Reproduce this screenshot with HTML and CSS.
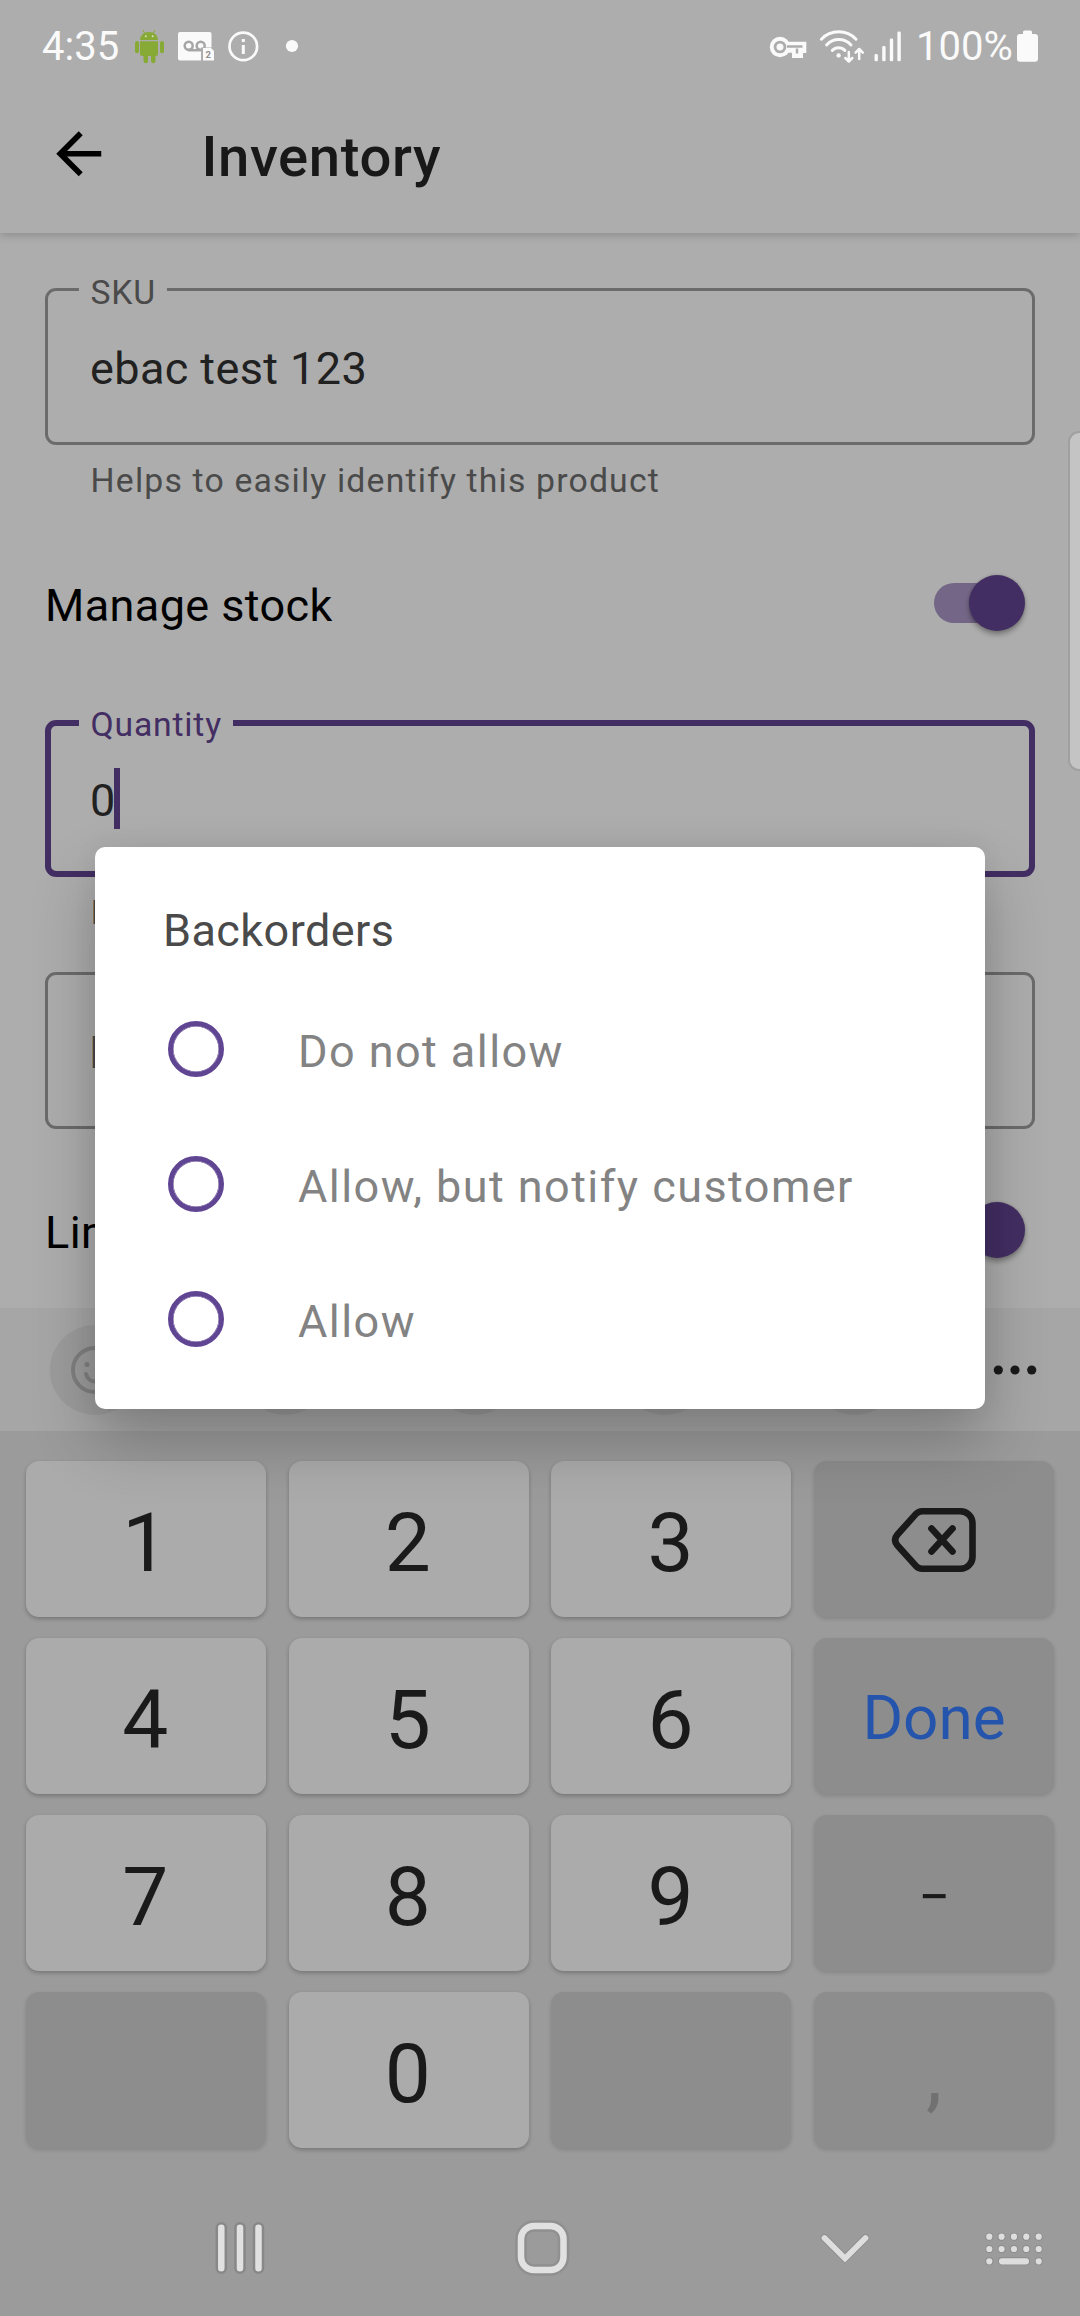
FILE: index.html
```html
<!DOCTYPE html>
<html lang="en">
<head>
<meta charset="utf-8">
<title>Inventory</title>
<link rel="stylesheet" href="styles.css">
</head>
<body>
<div class="screen">
  <header class="status">
    <span class="clock">4:35</span>
    <svg class="status-left" width="170" height="40" viewBox="134 26 170 40">
      <g fill="#87aa36">
        <path d="M140 40a9 8 0 0 1 18 0z"/>
        <path d="M145 34l-2-4M153 34l2-4" stroke="#87aa36" stroke-width="1"/>
        <path d="M140 41.3h18V54a2 2 0 0 1-2 2h-.5v5a2 2 0 0 1-4.5 0v-5h-3v5a2 2 0 0 1-4.5 0v-5H142a2 2 0 0 1-2-2z"/>
        <rect x="135" y="41" width="4" height="12.3" rx="2"/>
        <rect x="160" y="41" width="4" height="12.3" rx="2"/>
      </g>
      <circle cx="145.8" cy="36.3" r="1" fill="#d5dfbf"/><circle cx="152.7" cy="36.3" r="1" fill="#d5dfbf"/>
      <rect x="178" y="32" width="33.5" height="28.5" rx="2" fill="#fafafa"/>
      <g fill="none" stroke="#a6a6a6" stroke-width="2.5">
        <circle cx="188.7" cy="45.8" r="4"/><circle cx="200.7" cy="45.8" r="4"/><path d="M188 50.2h14"/>
      </g>
      <path d="M201 62V47.5h12V44h3v18z" fill="#adadad"/>
      <path d="M203 48h8l3 3v9.5h-11z" fill="#fafafa"/>
      <text x="205.4" y="58" class="badge">2</text>
      <circle cx="243.3" cy="46.4" r="13.8" fill="none" stroke="#fafafa" stroke-width="2.7"/>
      <path d="M243.3 39v3M243.3 45v9" stroke="#fafafa" stroke-width="3"/>
      <circle cx="292" cy="46" r="6.1" fill="#fafafa"/>
    </svg>
    <svg class="status-right" width="134" height="40" viewBox="769 26 134 40">
      <g fill="#fafafa">
        <circle cx="780" cy="47" r="10.2"/>
        <path d="M785 41.8h21.3V53h-3.3v5h-11v-5.3h-7z"/>
        <rect x="874.5" y="54" width="3.4" height="7.3" rx="1.4"/>
        <rect x="882.2" y="46" width="3.4" height="15.3" rx="1.4"/>
        <rect x="889.8" y="38.6" width="3.4" height="22.7" rx="1.4"/>
        <rect x="897.4" y="31.6" width="3.4" height="29.7" rx="1.4"/>
        <circle cx="838.6" cy="55.4" r="2.2"/>
      </g>
      <circle cx="780" cy="47" r="4.9" fill="none" stroke="#adadad" stroke-width="2.8"/>
      <path d="M787 46.5h15.5M797 48.5v5" fill="none" stroke="#adadad" stroke-width="2.4"/>
      <g fill="none" stroke="#fafafa" stroke-width="3" stroke-linecap="round" stroke-linejoin="round">
        <path d="M821.4 39.2a24 24 0 0 1 34.6 0M826.6 44.9a16.6 16.6 0 0 1 24.4 0M832.3 50.4a8.8 8.8 0 0 1 12.6 0"/>
        <path d="M848.8 52v9M845.3 58l3.5 3.5 3.5-3.5M859.2 59v-9M855.6 52.6l3.6-3.6 3.6 3.6" stroke-width="2.5"/>
      </g>
    </svg>
    <span class="percent">100%</span>
    <svg width="22" height="32" viewBox="1017 30 22 32"><path d="M1023 34v-2a1.5 1.5 0 0 1 1.5-1.5h6A1.5 1.5 0 0 1 1032 32v2h3a3 3 0 0 1 3 3v21.7a3 3 0 0 1-3 3h-15a3 3 0 0 1-3-3V37a3 3 0 0 1 3-3z" fill="#fafafa"/></svg>
  </header>

  <div class="toolbar">
    <svg class="back" viewBox="0 0 24 24"><path d="M20 11H7.83l5.59-5.59L12 4l-8 8 8 8 1.41-1.41L7.83 13H20z"/></svg>
    <h1 class="title">Inventory</h1>
  </div>

  <main class="form">
    <div class="field"><label class="label">SKU</label><span>ebac test 123</span></div>
    <p class="helper">Helps to easily identify this product</p>
    <div class="row"><span class="row-text">Manage stock</span><span class="switch"><span class="thumb"></span></span></div>
    <div class="field active"><label class="label">Quantity</label><span>0</span><span class="caret"></span></div>
    <p class="helper">I</p>
    <div class="field empty"><span>B</span></div>
    <div class="row last"><span class="row-text">Limit one per order</span><span class="switch"><span class="thumb"></span></span></div>
  </main>

  <div class="tools">
    <span class="tool"><svg width="50" height="50" viewBox="0 0 50 50" fill="none" stroke="#808080" stroke-width="4" stroke-linecap="round"><circle cx="25" cy="25" r="22"/><path d="M16 29c3 10 15 10 18 0"/><circle cx="17" cy="19.5" r="2.5" fill="#808080" stroke="none"/><circle cx="33" cy="19.5" r="2.5" fill="#808080" stroke="none"/></svg></span>
    <span class="tool"></span><span class="tool"></span><span class="tool"></span><span class="tool"></span>
    <svg class="more" width="44" height="12" viewBox="0 0 44 12" fill="#1a1a1a"><circle cx="5.3" cy="6" r="4.6"/><circle cx="22" cy="6" r="4.6"/><circle cx="38.7" cy="6" r="4.6"/></svg>
  </div>

  <div class="keys">
    <span class="key">1</span><span class="key">2</span><span class="key">3</span>
    <span class="key dark"><svg class="erase" width="86" height="66" viewBox="0 0 86 66" fill="none" stroke="#1a1a1a" stroke-width="6.6" stroke-linecap="round" stroke-linejoin="round"><path d="M31 4.2h38.500a12 12 0 0 1 12 12v33.600a12 12 0 0 1-12 12H31q-3.500 0-6-2.700L6.500 38.500q-4.800-5.500 0-11L25 6.900q2.500-2.700 6-2.700z"/><path d="M40.500 21.500l21 23M61.500 21.500l-21 23"/></svg></span>
    <span class="key">4</span><span class="key">5</span><span class="key">6</span><span class="key dark done">Done</span>
    <span class="key">7</span><span class="key">8</span><span class="key">9</span><span class="key dark minus">−</span>
    <span class="key dark"></span><span class="key">0</span><span class="key dark"></span><span class="key dark comma">,</span>
  </div>

  <nav class="nav">
    <svg width="1080" height="70" viewBox="0 2213 1080 70" fill="none" stroke-linecap="round">
      <g stroke="#888" stroke-width="11.500"><path d="M221.300 2227.700v40.500M240 2227.700v40.500M258.500 2227.700v40.500"/></g>
      <g stroke="#e1e1e1" stroke-width="6.500"><path d="M221.300 2227.700v40.500M240 2227.700v40.500M258.500 2227.700v40.500"/></g>
      <rect x="521" y="2226" width="42.500" height="44" rx="13" stroke="#909090" stroke-width="11.500"/>
      <rect x="521" y="2226" width="42.500" height="44" rx="13" stroke="#e1e1e1" stroke-width="6.500"/>
      <path d="M824.500 2238l20.500 20.500 20.500-20.500" stroke="#8e8e8e" stroke-width="7.500"/>
      <path d="M824.500 2238l20.500 20.500 20.500-20.500" stroke="#dedede" stroke-width="5.800"/>
      <g stroke="#8c8c8c" stroke-width="8"><path d="M989.300 2236.700h0M1001.600 2236.700h0M1014 2236.700h0M1026.300 2236.700h0M1038.700 2236.700h0M989.300 2249h0M1001.600 2249h0M1014 2249h0M1026.300 2249h0M1038.700 2249h0M989.300 2261.300h0M1002 2261.300h24M1038.700 2261.300h0"/></g>
      <g stroke="#dedede" stroke-width="6.200"><path d="M989.300 2236.700h0M1001.600 2236.700h0M1014 2236.700h0M1026.300 2236.700h0M1038.700 2236.700h0M989.300 2249h0M1001.600 2249h0M1014 2249h0M1026.300 2249h0M1038.700 2249h0M989.300 2261.300h0M1002 2261.300h24M1038.700 2261.300h0"/></g>
    </svg>
  </nav>

  <div class="edge-handle"></div>

  <section class="dialog">
    <h2 class="dialog-title">Backorders</h2>
    <div class="option"><span class="radio"></span>Do not allow</div>
    <div class="option"><span class="radio"></span>Allow, but notify customer</div>
    <div class="option"><span class="radio"></span>Allow</div>
  </section>
</div>
</body>
</html>
```
FILE: styles.css
```css
* { box-sizing: border-box; margin: 0; padding: 0; }
body { font-family: Roboto, sans-serif; }
svg { display: block; flex: none; }

.screen {
  position: relative;
  width: 1080px;
  height: 2316px;
  overflow: hidden;
  display: flex;
  flex-direction: column;
  background: #adadad;
}

/* status bar */
.status {
  height: 92px;
  flex: none;
  display: flex;
  align-items: center;
  padding: 0 41px 0 42px;
  font-size: 40px;
  color: #fafafa;
}
.clock { width: 92px; }
.status-right { margin-left: auto; margin-right: 13px; }
.percent { width: 101px; }
.badge { font: bold 9.5px Roboto, sans-serif; fill: #909090; }

/* app bar */
.toolbar {
  height: 141px;
  flex: none;
  display: flex;
  padding: 28px 45px;
  box-shadow: 0 2px 9px rgba(0, 0, 0, .2);
  clip-path: inset(0 0 -16px 0);
}
.back { width: 67.5px; height: 67.5px; }
.title {
  margin: 4px 0 0 89px;
  font-size: 56.25px;
  line-height: 66px;
  font-weight: 500;
  letter-spacing: .6px;
  color: #181818;
}

/* form */
.form {
  height: 1075px;
  flex: none;
  overflow: hidden;
  padding: 55px 45px 0;
  letter-spacing: .4px;
  font-size: 45px;
  line-height: 53px;
}
.field {
  position: relative;
  display: flex;
  height: 157px;
  padding: 51px 42px 0;
  border: 3px solid #6b6b6b;
  border-radius: 11px;
  color: #212121;
}
.label {
  position: absolute;
  left: 31px;
  top: -18px;
  padding: 0 10.5px 0 11.5px;
  background: #adadad;
  font-size: 33.75px;
  line-height: 40px;
  letter-spacing: .8px;
  color: #4a4a4a;
}
.field.active {
  border: 6px solid #432e63;
  padding: 48px 39px 0;
}
.active .label { left: 28px; top: -21px; color: #432e63; padding-right: 11.5px; }
.caret { width: 6px; height: 61px; margin: -6px 0 0 -2px; background: #432e63; }
.field.empty { margin-top: 39px; padding-left: 41px; color: #4a4a4a; }
.helper {
  margin: 16px 0 0 45.6px;
  height: 40px;
  font-size: 33.75px;
  line-height: 40px;
  letter-spacing: 1.17px;
  color: #4a4a4a;
}
.row {
  height: 56px;
  margin: 74px 10px 89px 0;
  display: flex;
  justify-content: space-between;
  align-items: center;
  color: #000;
}
.row.last { margin-top: 73px; }
.row-text { padding-top: 5px; }
.last .row-text { padding-top: 4px; }
.switch {
  width: 91px;
  height: 40px;
  display: flex;
  align-items: center;
  justify-content: flex-end;
  border-radius: 20px;
  background: linear-gradient(90deg, #736686 60px, transparent 60px);
}
.thumb {
  width: 56px;
  height: 56px;
  flex: none;
  border-radius: 50%;
  background: #432e63;
  box-shadow: 0 4px 5px rgba(0, 0, 0, .28), 0 0 3px rgba(0, 0, 0, .2);
}

/* keyboard */
.tools {
  height: 123px;
  flex: none;
  display: flex;
  align-items: center;
  gap: 100px;
  padding: 0 42px 0 50px;
  background: #a6a6a6;
}
.tool {
  width: 90px;
  height: 90px;
  display: grid;
  place-items: center;
  border-radius: 50%;
  background: #9c9c9c;
}
.more { margin-left: -7px; }
.keys {
  height: 749px;
  flex: none;
  display: grid;
  grid-template-columns: repeat(4, 240px);
  grid-auto-rows: 156px;
  gap: 21px 22.67px;
  padding: 30px 26px;
  background: #9b9b9b;
}
.key {
  display: grid;
  place-items: center;
  padding: 7px 1.5px 0 0;
  border-radius: 13px;
  background: #ababab;
  box-shadow: 0 2px 4px rgba(0, 0, 0, .24);
  font-size: 82px;
  line-height: 96px;
  color: #1a1a1a;
}
.key.dark { padding-right: 0; background: #8d8d8d; box-shadow: 0 2px 4px rgba(0, 0, 0, .14); }
.erase { margin-top: -6px; }
.key.done { font-size: 62px; padding-top: 4px; color: #2454ab; }
.key.minus { font-size: 56px; padding-top: 8px; }
.key.comma { color: #717171; }

.nav {
  height: 136px;
  flex: none;
  padding-top: 33px;
  background: #9b9b9b;
}

.edge-handle {
  position: absolute;
  left: 1068px;
  top: 431px;
  width: 22px;
  height: 340px;
  border: 2px solid #a0a0a0;
  border-radius: 11px;
  background: #c4c4c4;
}

/* dialog */
.dialog {
  position: absolute;
  left: 95px;
  top: 847px;
  width: 890px;
  height: 562px;
  padding: 57px 67px 0;
  border-radius: 10px;
  background: #fff;
  box-shadow: 0 32px 64px rgba(0, 0, 0, .24), 0 0 26px rgba(0, 0, 0, .05);
  font-size: 45px;
}
.dialog-title {
  margin: 0 0 24px 1px;
  font-size: 45px;
  line-height: 53px;
  font-weight: 400;
  letter-spacing: .42px;
  color: #4a4a4a;
}
.option {
  height: 135px;
  display: flex;
  align-items: center;
  gap: 74px;
  padding: 5px 0 0 6px;
  letter-spacing: 1.44px;
  color: #838383;
}
.radio {
  width: 56px;
  height: 56px;
  margin-top: -5px;
  border: 5.6px solid #604593;
  border-radius: 50%;
  box-shadow: inset 0 0 0 .5px #604593;
}
```
